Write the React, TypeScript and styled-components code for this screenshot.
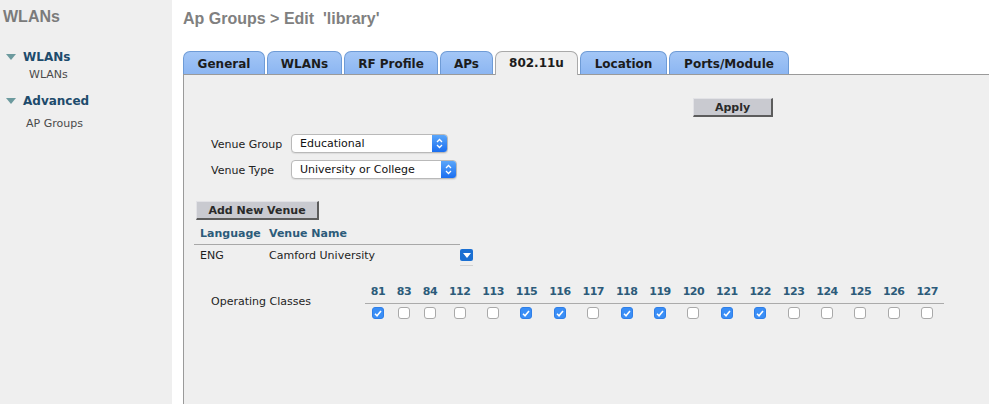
import React from "react";
import styled, { createGlobalStyle } from "styled-components";

const GlobalStyle = createGlobalStyle`
  html, body { margin: 0; padding: 0; background: #ffffff; }
  body { font-family: "DejaVu Sans", Verdana, sans-serif; }
  * { box-sizing: border-box; }
`;

const Page = styled.div`
  display: flex;
  width: 989px;
  height: 404px;
  overflow: hidden;
`;

const Sidebar = styled.aside`
  width: 172px;
  flex: none;
  background: #efefef;
  padding-top: 8px;
`;

const SideTitle = styled.div`
  font-family: "Liberation Sans", Arial, sans-serif;
  font-weight: bold;
  font-size: 16px;
  line-height: 18px;
  color: #7b7b7b;
  padding-left: 3px;
`;

const TreeGroup = styled.div<{ $top: number }>`
  margin-top: ${(p) => p.$top}px;
`;

const TreeHead = styled.div`
  display: flex;
  align-items: center;
  height: 16px;
  font-weight: bold;
  font-size: 12px;
  color: #1d4b6c;
`;

const Caret = styled.span`
  width: 0;
  height: 0;
  margin-left: 6px;
  margin-right: 7px;
  border-left: 5px solid transparent;
  border-right: 5px solid transparent;
  border-top: 6px solid #6c9a9e;
`;

const TreeItem = styled.div<{ $left: number; $top: number }>`
  font-size: 11px;
  line-height: 14px;
  color: #4a4a4a;
  padding-left: ${(p) => p.$left}px;
  margin-top: ${(p) => p.$top}px;
`;

const Main = styled.main`
  flex: 1;
  display: flex;
  flex-direction: column;
  padding: 10px 0 0 11px;
  background: #ffffff;
`;

const Title = styled.h1`
  margin: 0;
  font-family: "Liberation Sans", Arial, sans-serif;
  font-weight: bold;
  font-size: 16px;
  line-height: 18px;
  color: #808080;
`;

const TabBar = styled.div`
  display: flex;
  gap: 2px;
  margin-top: 23px;
  align-items: flex-end;
  position: relative;
  z-index: 1;
`;

const Tab = styled.div<{ $w: number; $active?: boolean }>`
  width: ${(p) => p.$w}px;
  height: ${(p) => (p.$active ? 24 : 23)}px;
  margin-bottom: ${(p) => (p.$active ? -1 : 0)}px;
  border: 1px solid ${(p) => (p.$active ? "#a9a9a9" : "#6e9bd6")};
  border-bottom: none;
  border-radius: 7px 7px 0 0;
  background: ${(p) =>
    p.$active ? "#efefef" : "linear-gradient(#a3c6f6, #8cb6f2)"};
  display: flex;
  align-items: center;
  justify-content: center;
  padding-top: ${(p) => (p.$active ? 0 : 1)}px;
  padding-bottom: ${(p) => (p.$active ? 1 : 0)}px;
  font-weight: bold;
  font-size: 12px;
  color: #1c1c1c;
`;

const Panel = styled.section`
  flex: 1;
  background: #efefef;
  border-top: 1px solid #9a9a9a;
  border-left: 1px solid #9a9a9a;
  display: flex;
  flex-direction: column;
  align-items: flex-start;
  font-size: 11px;
  color: #222;
`;

const ApplyRow = styled.div`
  margin-top: 23px;
  padding-left: 509px;
`;

const GrayButton = styled.button<{ $w: number }>`
  width: ${(p) => p.$w}px;
  height: 19px;
  padding: 1px 0 0 0;
  font-family: "DejaVu Sans", Verdana, sans-serif;
  font-weight: bold;
  font-size: 11px;
  color: #2a2a2a;
  background: #c9cad0;
  border: none;
  border-top: 1px solid #e2e2e6;
  border-left: 1px solid #e2e2e6;
  border-right: 2px solid #5c5c5c;
  border-bottom: 2px solid #5c5c5c;
  display: flex;
  align-items: center;
  justify-content: center;
`;

const FormGrid = styled.div`
  margin-top: 17px;
  padding-left: 27px;
  display: grid;
  grid-template-columns: 80px auto;
  row-gap: 7px;
  align-items: center;
`;

const FieldLabel = styled.span`
  font-size: 11px;
  padding-top: 1px;
  color: #222;
`;

const Select = styled.div<{ $w: number }>`
  width: ${(p) => p.$w}px;
  height: 19px;
  display: flex;
  align-items: stretch;
  background: #fff;
  border: 1px solid #b9b9b9;
  border-radius: 4px;
  box-shadow: 0 1px 1px rgba(0, 0, 0, 0.08);
  overflow: hidden;
`;

const SelectText = styled.span`
  flex: 1;
  padding: 1px 0 0 8px;
  line-height: 16px;
  font-size: 11px;
  color: #111;
`;

const SelectKnob = styled.span`
  width: 15px;
  flex: none;
  background: linear-gradient(#5aa6fa, #1a6ef0);
  display: flex;
  align-items: center;
  justify-content: center;
`;

const AddRow = styled.div`
  margin-top: 22px;
  margin-left: 12px;
`;

const VenueTable = styled.div`
  margin-left: 10px;
  display: grid;
  grid-template-columns: 69px 197px 14px;
`;

const HeadCell = styled.div`
  height: 25px;
  padding: 7px 0 0 6px;
  font-weight: bold;
  font-size: 11px;
  color: #2c5b7a;
  border-bottom: 1px solid #a8a8a8;
`;

const BodyCell = styled.div`
  height: 22px;
  padding: 4px 0 0 6px;
  font-size: 11px;
  color: #1e1e1e;
`;

const IconCell = styled.div`
  padding-top: 4px;
  display: flex;
  flex-direction: column;
`;

const DropIcon = styled.span`
  width: 13px;
  height: 12px;
  border-radius: 2px;
  background: #1a6fd2;
  display: flex;
  align-items: center;
  justify-content: center;
`;

const IconShadow = styled.span`
  margin-top: 4px;
  width: 13px;
  height: 1px;
  background: #d2d2d2;
`;

const OpBlock = styled.div`
  margin-top: 13px;
  padding-left: 27px;
  display: flex;
  align-items: center;
`;

const OpLabel = styled.span`
  width: 154px;
  padding-top: 0px;
  font-size: 11px;
  color: #1e1e1e;
`;

const ClassTable = styled.div`
  display: flex;
  flex-direction: column;
`;

const ClassRow = styled.div<{ $line?: boolean }>`
  display: flex;
  border-bottom: ${(p) => (p.$line ? "1px solid #ababab" : "none")};
`;

const NumCell = styled.div<{ $w: number }>`
  width: ${(p) => p.$w}px;
  height: 23px;
  line-height: 24px;
  text-align: center;
  font-weight: bold;
  font-size: 11px;
  letter-spacing: -0.5px;
  color: #2c5b7a;
`;

const BoxCell = styled.div<{ $w: number }>`
  width: ${(p) => p.$w}px;
  height: 19px;
  padding-top: 3px;
  display: flex;
  justify-content: center;
`;

const Check = styled.span<{ $on: boolean }>`
  width: 12px;
  height: 12px;
  border-radius: 3px;
  border: 1px solid ${(p) => (p.$on ? "#2f7fe8" : "#a9a9a9")};
  background: ${(p) => (p.$on ? "#3a8ef6" : "#ffffff")};
  display: flex;
  align-items: center;
  justify-content: center;
`;

const tabs = [
  { label: "General", w: 82 },
  { label: "WLANs", w: 75 },
  { label: "RF Profile", w: 94 },
  { label: "APs", w: 53 },
  { label: "802.11u", w: 83, active: true },
  { label: "Location", w: 87 },
  { label: "Ports/Module", w: 120 },
];

const classes: { n: string; on: boolean }[] = [
  { n: "81", on: true },
  { n: "83", on: false },
  { n: "84", on: false },
  { n: "112", on: false },
  { n: "113", on: false },
  { n: "115", on: true },
  { n: "116", on: true },
  { n: "117", on: false },
  { n: "118", on: true },
  { n: "119", on: true },
  { n: "120", on: false },
  { n: "121", on: true },
  { n: "122", on: true },
  { n: "123", on: false },
  { n: "124", on: false },
  { n: "125", on: false },
  { n: "126", on: false },
  { n: "127", on: false },
];

const colW = (n: string) => (n.length === 2 ? 26 : 33.4);

const Knob = () => (
  <SelectKnob>
    <svg width="7" height="11" viewBox="0 0 7 11">
      <path d="M1 4 L3.5 1.5 L6 4 M1 7 L3.5 9.5 L6 7" stroke="#fff" strokeWidth="1.3" fill="none" />
    </svg>
  </SelectKnob>
);

const Tick = () => (
  <svg width="8" height="7" viewBox="0 0 8 7">
    <path d="M1 3.8 L3 5.8 L7 1" stroke="#fff" strokeWidth="1.6" fill="none" />
  </svg>
);

export default function App() {
  return (
    <>
      <GlobalStyle />
      <Page>
        <Sidebar>
          <SideTitle>WLANs</SideTitle>
          <TreeGroup $top={23}>
            <TreeHead>
              <Caret />
              WLANs
            </TreeHead>
            <TreeItem $left={29} $top={3}>WLANs</TreeItem>
          </TreeGroup>
          <TreeGroup $top={11}>
            <TreeHead>
              <Caret />
              Advanced
            </TreeHead>
            <TreeItem $left={26} $top={8}>AP Groups</TreeItem>
          </TreeGroup>
        </Sidebar>
        <Main>
          <Title>Ap Groups &gt; Edit&nbsp; 'library'</Title>
          <TabBar>
            {tabs.map((t) => (
              <Tab key={t.label} $w={t.w} $active={t.active}>
                {t.label}
              </Tab>
            ))}
          </TabBar>
          <Panel>
            <ApplyRow>
              <GrayButton $w={80}>Apply</GrayButton>
            </ApplyRow>
            <FormGrid>
              <FieldLabel>Venue Group</FieldLabel>
              <Select $w={157}>
                <SelectText>Educational</SelectText>
                <Knob />
              </Select>
              <FieldLabel>Venue Type</FieldLabel>
              <Select $w={166}>
                <SelectText>University or College</SelectText>
                <Knob />
              </Select>
            </FormGrid>
            <AddRow>
              <GrayButton $w={123}>Add New Venue</GrayButton>
            </AddRow>
            <VenueTable>
              <HeadCell>Language</HeadCell>
              <HeadCell>Venue Name</HeadCell>
              <div />
              <BodyCell>ENG</BodyCell>
              <BodyCell>Camford University</BodyCell>
              <IconCell>
                <DropIcon>
                  <svg width="8" height="5" viewBox="0 0 8 5">
                    <path d="M0 0 H8 L4 5 Z" fill="#fff" />
                  </svg>
                </DropIcon>
                <IconShadow />
              </IconCell>
            </VenueTable>
            <OpBlock>
              <OpLabel>Operating Classes</OpLabel>
              <ClassTable>
                <ClassRow $line>
                  {classes.map((c) => (
                    <NumCell key={c.n} $w={colW(c.n)}>
                      {c.n}
                    </NumCell>
                  ))}
                </ClassRow>
                <ClassRow>
                  {classes.map((c) => (
                    <BoxCell key={c.n} $w={colW(c.n)}>
                      <Check $on={c.on}>{c.on && <Tick />}</Check>
                    </BoxCell>
                  ))}
                </ClassRow>
              </ClassTable>
            </OpBlock>
          </Panel>
        </Main>
      </Page>
    </>
  );
}
